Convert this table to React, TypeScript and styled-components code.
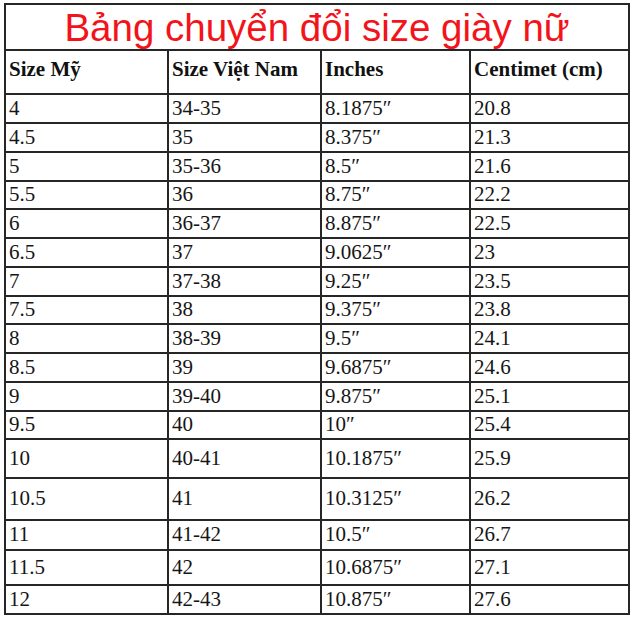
import React from "react";
import styled, { createGlobalStyle } from "styled-components";

const Global = createGlobalStyle`
  html, body { margin: 0; padding: 0; background: #ffffff; }
  body { font-family: "Liberation Serif", "Times New Roman", serif; }
`;

const Page = styled.div`
  width: 640px;
  height: 628px;
  padding: 3px 0 0 4px;
  box-sizing: border-box;
  background: #ffffff;
`;

const Table = styled.table`
  border-collapse: collapse;
  table-layout: fixed;
  width: 624px;
  border: 2px solid #262626;
`;

const TitleCell = styled.td`
  padding: 2px 0 0 0;
  border: 2px solid #262626;
  text-align: center;
  vertical-align: middle;
  font-family: "Liberation Sans", Arial, sans-serif;
  font-size: 38.5px;
  line-height: 1;
  color: #f2141a;
`;

const Row = styled.tr<{ $h: number }>`
  height: ${(p) => p.$h}px;
`;

const HeadCell = styled.th`
  padding: 0 0 5px 3px;
  border: 2px solid #262626;
  text-align: left;
  vertical-align: middle;
  font-family: "Liberation Serif", "Times New Roman", serif;
  font-weight: bold;
  font-size: 21px;
  color: #111111;
  white-space: nowrap;
`;

const Cell = styled.td`
  padding: 0 0 1px 3px;
  border: 2px solid #262626;
  text-align: left;
  vertical-align: middle;
  font-family: "Liberation Serif", "Times New Roman", serif;
  font-size: 21px;
  line-height: 1;
  color: #161616;
  white-space: nowrap;
`;

const rows: [string, string, string, string, number][] = [
  ["4", "34-35", "8.1875″", "20.8", 29],
  ["4.5", "35", "8.375″", "21.3", 29],
  ["5", "35-36", "8.5″", "21.6", 29],
  ["5.5", "36", "8.75″", "22.2", 28],
  ["6", "36-37", "8.875″", "22.5", 29],
  ["6.5", "37", "9.0625″", "23", 29],
  ["7", "37-38", "9.25″", "23.5", 29],
  ["7.5", "38", "9.375″", "23.8", 28],
  ["8", "38-39", "9.5″", "24.1", 29],
  ["8.5", "39", "9.6875″", "24.6", 29],
  ["9", "39-40", "9.875″", "25.1", 29],
  ["9.5", "40", "10″", "25.4", 28],
  ["10", "40-41", "10.1875″", "25.9", 39],
  ["10.5", "41", "10.3125″", "26.2", 42],
  ["11", "41-42", "10.5″", "26.7", 30],
  ["11.5", "42", "10.6875″", "27.1", 35],
  ["12", "42-43", "10.875″", "27.6", 29],
];

export default function App() {
  return (
    <Page>
      <Global />
      <Table>
        <colgroup>
          <col style={{ width: 163 }} />
          <col style={{ width: 153 }} />
          <col style={{ width: 149 }} />
          <col style={{ width: 159 }} />
        </colgroup>
        <tbody>
          <Row $h={46}>
            <TitleCell colSpan={4}>Bảng chuyển đổi size giày nữ</TitleCell>
          </Row>
          <Row $h={44}>
            <HeadCell>Size Mỹ</HeadCell>
            <HeadCell>Size Việt Nam</HeadCell>
            <HeadCell>Inches</HeadCell>
            <HeadCell>Centimet (cm)</HeadCell>
          </Row>
          {rows.map(([a, b, c, d, h]) => (
            <Row key={a} $h={h}>
              <Cell>{a}</Cell>
              <Cell>{b}</Cell>
              <Cell>{c}</Cell>
              <Cell>{d}</Cell>
            </Row>
          ))}
        </tbody>
      </Table>
    </Page>
  );
}
